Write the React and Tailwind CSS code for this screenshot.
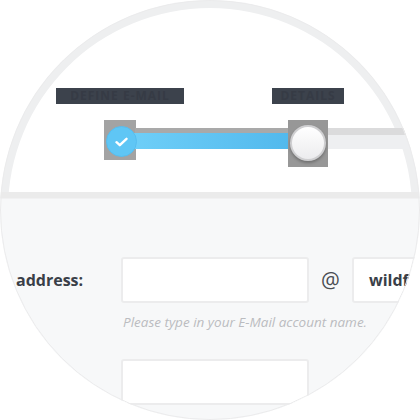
import React from "react";

function Slider() {
  return (
    <div className="relative h-[47px] w-full mt-[16px]">
      <div className="absolute left-[104px] top-0 w-[32px] h-[40px] bg-[#a3a3a3]" />
      <div className="absolute left-[135px] top-[8px] w-[160px] h-[5px] bg-[#a9a9a9]" />
      <div className="absolute left-[128px] top-[13px] w-[175px] h-[16px] bg-gradient-to-r from-[#6fcff8] to-[#4fb7ec]" />
      <div className="absolute left-[320px] top-[8px] w-[100px] h-[7px] bg-[#dbdbdc]" />
      <div className="absolute left-[320px] top-[15px] w-[100px] h-[14px] bg-[#eeeff1]" />
      <div className="absolute left-[288px] top-0 w-[40px] h-[47px] bg-[#979797]" />
      <div className="absolute left-[106px] top-[6px] w-[31px] h-[31px] rounded-full bg-[#5fc6f5] border border-[#57bdee] flex items-center justify-center">
        <svg width="13" height="10" viewBox="0 0 13 10" fill="none">
          <path d="M1.5 5.2 L4.8 8.2 L11.5 1.8" stroke="white" strokeWidth="2.4" strokeLinecap="round" strokeLinejoin="round" />
        </svg>
      </div>
      <div className="absolute left-[290px] top-[5px] w-[36px] h-[36px] rounded-full bg-[#cfcfd1] p-[2px] shadow-[0_2px_3px_rgba(0,0,0,0.25)]">
        <div className="w-full h-full rounded-full bg-gradient-to-b from-white to-[#ececee]" />
      </div>
    </div>
  );
}

export default function App() {
  return (
    <div className="w-[420px] h-[420px] bg-white" style={{ fontFamily: '"Open Sans", "Liberation Sans", sans-serif' }}>
      <div className="relative w-[420px] h-[420px] rounded-full overflow-hidden bg-white shadow-[inset_0_0_0_8px_#eeeff0] flex flex-col">
        <div className="h-[192px] shrink-0 pt-[88px]">
          <div className="flex">
            <div className="ml-[56px] w-[128px] h-[16px] bg-[#3c424c] text-[#363b45] text-[12px] leading-[16px] font-bold uppercase tracking-[1px] text-center overflow-hidden">
              Define E-Mail
            </div>
            <div className="ml-[88px] w-[72px] h-[16px] bg-[#3c424c] text-[#363b45] text-[12px] leading-[16px] font-bold uppercase tracking-[1px] text-center overflow-hidden">
              Details
            </div>
          </div>
          <Slider />
        </div>
        <div className="h-[6px] shrink-0 bg-[#ebebeb]" />
        <div className="h-px shrink-0 bg-[#f1f1f2]" />
        <div className="flex-1 bg-[#f7f8f9] pt-[58px]">
          <div className="flex items-center">
            <div className="w-[121px] shrink-0 pl-[16px] text-[16px] font-bold text-[#3a3f48]">address:</div>
            <div className="w-[188px] h-[46px] shrink-0 bg-white border-2 border-[#ececed] rounded-[3px]" />
            <div className="w-[43px] shrink-0 text-center text-[21px] leading-[24px] text-[#4a4d52]">@</div>
            <div className="w-[140px] h-[46px] shrink-0 bg-white border-2 border-[#ececed] rounded-[3px] pl-[15px] flex items-center text-[16px] font-bold text-[#3a3f48]">
              wildfire
            </div>
          </div>
          <div className="pl-[123px] mt-[10px] text-[13.5px] leading-[18px] italic text-[#bbbcc0]">
            Please type in your E-Mail account name.
          </div>
          <div className="ml-[121px] mt-[28px] w-[188px] h-[46px] bg-white border-2 border-[#ececed] rounded-[3px]" />
        </div>
        <div className="absolute inset-0 rounded-full border border-[#ebebec] pointer-events-none" />
      </div>
    </div>
  );
}
